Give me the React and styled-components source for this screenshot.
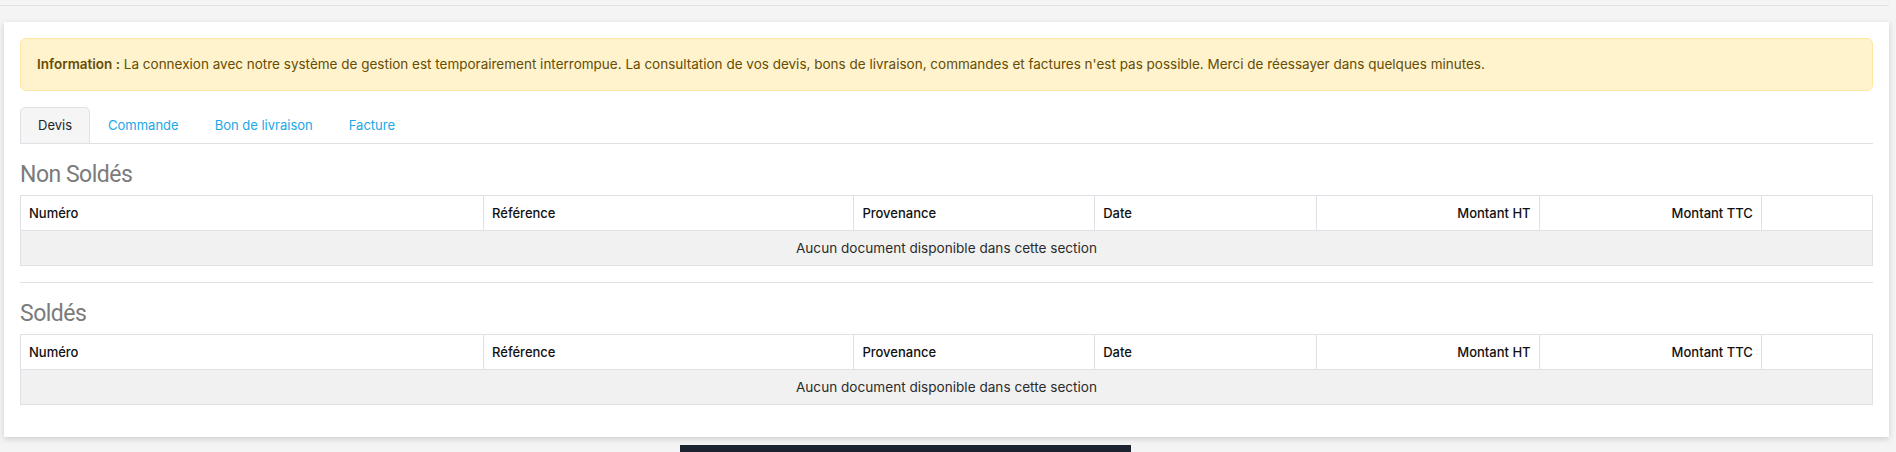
import styled, { createGlobalStyle } from "styled-components";

const GlobalStyle = createGlobalStyle`
  html, body {
    margin: 0;
    padding: 0;
    background: #f4f4f4;
    font-family: "Inter", "Noto Sans", sans-serif;
    color: #212529;
    overflow: hidden;
  }
  * { box-sizing: border-box; }
`;

const Page = styled.div`
  width: 1889px;
`;

const TopRule = styled.div`
  height: 6px;
  border-bottom: 1px solid #e2e2e2;
`;

const Card = styled.div`
  margin: 16px 0 0 4px;
  background: #fff;
  padding: 16px 16px 16px;
  box-shadow: 0 2px 6px rgba(0, 0, 0, 0.16);
`;

const Alert = styled.div`
  background: #fff3cd;
  border: 1px solid #fde7a2;
  border-radius: 6px;
  color: #664d03;
  font-size: 13.5px;
  line-height: 19px;
  padding: 16px 16px;
  margin-bottom: 16px;
  white-space: nowrap;
`;

const Strong = styled.strong`
  font-weight: 600;
`;

const Tabs = styled.ul`
  display: flex;
  list-style: none;
  margin: 0;
  padding: 0;
  border-bottom: 1px solid #dee2e6;
`;

const Tab = styled.li`
  margin-bottom: -1px;
  padding: 8px 17px;
  font-size: 13px;
  line-height: 19px;
  border: 1px solid ${(p) => (p.$active ? "#dee2e6" : "transparent")};
  border-radius: 5px 5px 0 0;
  background: ${(p) => (p.$active ? "#f5f5f5" : "transparent")};
  color: ${(p) => (p.$active ? "#212529" : "#20a8e8")};
  cursor: pointer;
`;

const Heading = styled.h3`
  font-family: "Roboto", "Liberation Sans", sans-serif;
  font-weight: 400;
  font-size: 23px;
  letter-spacing: -0.5px;
  line-height: 26px;
  color: #7b7b7b;
  margin: 18px 0 7px;
`;

const Table = styled.table`
  width: 100%;
  border-collapse: collapse;
  table-layout: fixed;
  font-size: 13px;
  margin-bottom: 16px;
`;

const Th = styled.th`
  width: ${(p) => p.$w};
  border: 1px solid #dee2e6;
  padding: 8px;
  line-height: 18px;
  font-weight: 500;
  color: #111;
  text-align: ${(p) => (p.$right ? "right" : "left")};
`;

const EmptyCell = styled.td`
  border: 1px solid #dee2e6;
  background: #f1f1f1;
  padding: 8px;
  font-size: 13.6px;
  line-height: 18px;
  text-align: center;
  color: #2b2b2b;
`;

const Divider = styled.hr`
  border: 0;
  border-top: 1px solid #dee2e6;
  margin: 0;
`;

const Footer = styled.div`
  margin: 8px 0 0 680px;
  width: 451px;
  height: 20px;
  background: #1c2330;
`;

const columns = [
  { label: "Numéro", w: "25%" },
  { label: "Référence", w: "20%" },
  { label: "Provenance", w: "13%" },
  { label: "Date", w: "12%" },
  { label: "Montant HT", w: "12%", right: true },
  { label: "Montant TTC", w: "12%", right: true },
  { label: "", w: "6%" },
];

function DocTable() {
  return (
    <Table>
      <thead>
        <tr>
          {columns.map((c, i) => (
            <Th key={i} $w={c.w} $right={c.right}>
              {c.label}
            </Th>
          ))}
        </tr>
      </thead>
      <tbody>
        <tr>
          <EmptyCell colSpan={7}>Aucun document disponible dans cette section</EmptyCell>
        </tr>
      </tbody>
    </Table>
  );
}

export default function App() {
  const tabs = ["Devis", "Commande", "Bon de livraison", "Facture"];
  return (
    <Page>
      <GlobalStyle />
      <TopRule />
      <Card>
        <Alert>
          <Strong>Information :</Strong> La connexion avec notre système de gestion est
          temporairement interrompue. La consultation de vos devis, bons de livraison,
          commandes et factures n'est pas possible. Merci de réessayer dans quelques minutes.
        </Alert>
        <Tabs>
          {tabs.map((t, i) => (
            <Tab key={t} $active={i === 0}>
              {t}
            </Tab>
          ))}
        </Tabs>
        <Heading>Non Soldés</Heading>
        <DocTable />
        <Divider />
        <Heading>Soldés</Heading>
        <DocTable />
      </Card>
      <Footer />
    </Page>
  );
}
